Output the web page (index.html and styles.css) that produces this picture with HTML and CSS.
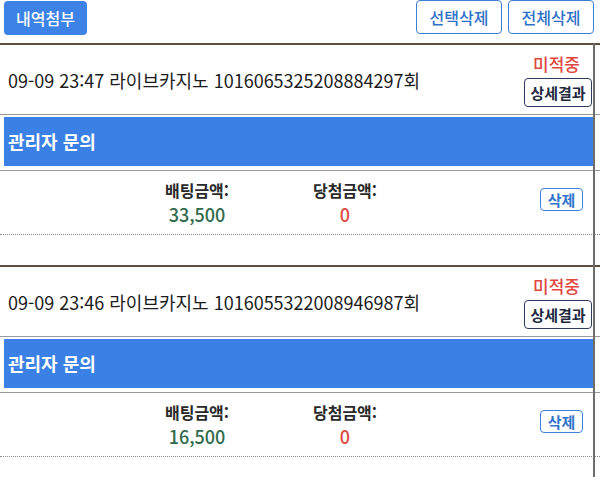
FILE: index.html
```html
<!DOCTYPE html>
<html lang="ko">
<head>
    <meta charset="UTF-8">
    <meta name="viewport" content="width=device-width, initial-scale=1.0">
    <title>베팅내역</title>
    <link rel="stylesheet" href="styles.css">
</head>
<body>
    <div class="topbar">
        <button class="btn-fill">내역첨부</button>
        <div class="top-right">
            <button class="btn-line">선택삭제</button>
            <button class="btn-line">전체삭제</button>
        </div>
    </div>

    <div class="list">
        <div class="item">
            <div class="item-head">
                <div class="title">09-09 23:47 라이브카지노 1016065325208884297회</div>
                <div class="state">
                    <span class="miss">미적중</span>
                    <button class="btn-detail">상세결과</button>
                </div>
            </div>
            <div class="admin">관리자 문의</div>
            <div class="amounts">
                <div class="amount">
                    <div class="label">배팅금액:</div>
                    <div class="value bet">33,500</div>
                </div>
                <div class="amount">
                    <div class="label">당첨금액:</div>
                    <div class="value win">0</div>
                </div>
                <button class="btn-del">삭제</button>
            </div>
        </div>

        <div class="item">
            <div class="item-head">
                <div class="title">09-09 23:46 라이브카지노 1016055322008946987회</div>
                <div class="state">
                    <span class="miss">미적중</span>
                    <button class="btn-detail">상세결과</button>
                </div>
            </div>
            <div class="admin">관리자 문의</div>
            <div class="amounts">
                <div class="amount">
                    <div class="label">배팅금액:</div>
                    <div class="value bet">16,500</div>
                </div>
                <div class="amount">
                    <div class="label">당첨금액:</div>
                    <div class="value win">0</div>
                </div>
                <button class="btn-del">삭제</button>
            </div>
        </div>
    </div>
</body>
</html>
```

FILE: styles.css
```css
body {
    margin: 0;
    font-family: "Noto Sans CJK KR", "Noto Sans", sans-serif;
    background: #fff;
    color: #222;
}
button {
    font-family: inherit;
    cursor: pointer;
}
.topbar {
    display: flex;
    justify-content: space-between;
    align-items: flex-start;
    height: 43px;
    padding: 0 6px 0 4px;
}
.top-right {
    display: flex;
    gap: 6px;
}
.btn-fill {
    margin-top: 1px;
    width: 83px;
    height: 34px;
    background: #3d82e6;
    color: #fff;
    border: none;
    border-radius: 4px;
    font-size: 16px;
    font-weight: 500;
}
.btn-line {
    width: 86px;
    height: 34px;
    background: #fff;
    color: #2f72c9;
    border: 1px solid #3a7ed8;
    border-radius: 4px;
    font-size: 16px;
    font-weight: 500;
}
.list {
    position: relative;
}
.list::after {
    content: "";
    position: absolute;
    top: 0;
    bottom: 0;
    right: 5px;
    width: 2px;
    background: #6d6d6d;
}
.item {
    border-top: 2px solid #5c4d3e;
    height: 220px;
}
.item-head {
    display: flex;
    justify-content: space-between;
    align-items: center;
    height: 69px;
    padding: 0 8px 0 8px;
    border-bottom: 1px solid #9a9a9a;
}
.title {
    font-size: 18px;
    color: #1c1c1c;
}
.state {
    display: flex;
    flex-direction: column;
    align-items: flex-end;
    gap: 5px;
    margin-top: 2px;
}
.miss {
    color: #e0483f;
    font-size: 17px;
    line-height: 19px;
    padding-right: 12px;
    font-weight: 500;
}
.btn-detail {
    width: 68px;
    height: 29px;
    padding: 0;
    background: #fff;
    color: #1e2a40;
    border: 1px solid #2c3a5c;
    border-radius: 4px;
    font-size: 15px;
    font-weight: bold;
}
.admin {
    margin: 2px 6px 0 4px;
    height: 49px;
    line-height: 49px;
    padding-left: 4px;
    background: #3b80e5;
    color: #fff;
    font-size: 18px;
    font-weight: bold;
}
.amounts {
    display: flex;
    align-items: center;
    height: 63px;
    margin-top: 4px;
    border-top: 1px solid #9a9a9a;
    border-bottom: 1px dotted #8a8a8a;
    padding-left: 154px;
}
.amount {
    width: 86px;
    text-align: center;
    margin-right: 62px;
}
.label {
    font-size: 16px;
    font-weight: bold;
    color: #2a2a2a;
    line-height: 22px;
}
.value {
    font-size: 18px;
    line-height: 26px;
    font-weight: 500;
}
.bet {
    color: #2f6b4c;
}
.win {
    color: #dc4a42;
}
.btn-del {
    margin-left: auto;
    margin-right: 17px;
    margin-bottom: 6px;
    width: 43px;
    height: 23px;
    padding: 0;
    background: #fff;
    color: #3374cc;
    border: 1px solid #3e82dc;
    border-radius: 4px;
    font-size: 15px;
    font-weight: bold;
}
```
